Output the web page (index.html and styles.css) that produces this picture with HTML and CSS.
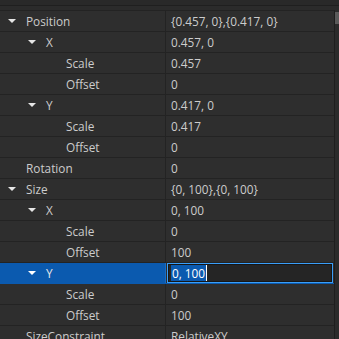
FILE: index.html
```html
<!DOCTYPE html>
<html>
<head>
<meta charset="utf-8">
<link rel="stylesheet" href="styles.css">
</head>
<body>
<div class="panel">
  <div class="topbar"></div>
  <div class="gapbar"></div>
  <div class="main">
    <div class="list">
      <div class="row"><div class="name l0"><span class="arrow"></span>Position</div><div class="val">{0.457, 0},{0.417, 0}</div></div>
      <div class="row"><div class="name l1"><span class="arrow"></span>X</div><div class="val">0.457, 0</div></div>
      <div class="row"><div class="name l2">Scale</div><div class="val">0.457</div></div>
      <div class="row"><div class="name l2">Offset</div><div class="val">0</div></div>
      <div class="row"><div class="name l1"><span class="arrow"></span>Y</div><div class="val">0.417, 0</div></div>
      <div class="row"><div class="name l2">Scale</div><div class="val">0.417</div></div>
      <div class="row"><div class="name l2">Offset</div><div class="val">0</div></div>
      <div class="row"><div class="name l0 noarrow">Rotation</div><div class="val">0</div></div>
      <div class="row"><div class="name l0"><span class="arrow"></span>Size</div><div class="val">{0, 100},{0, 100}</div></div>
      <div class="row"><div class="name l1"><span class="arrow"></span>X</div><div class="val">0, 100</div></div>
      <div class="row"><div class="name l2">Scale</div><div class="val">0</div></div>
      <div class="row"><div class="name l2">Offset</div><div class="val">100</div></div>
      <div class="row selected"><div class="name l1"><span class="arrow"></span>Y</div><div class="val edit"><div class="input"><span class="sel">0, 100</span><span class="caret"></span></div></div></div>
      <div class="row"><div class="name l2">Scale</div><div class="val">0</div></div>
      <div class="row"><div class="name l2">Offset</div><div class="val">100</div></div>
      <div class="row"><div class="name l0 noarrow">SizeConstraint</div><div class="val">RelativeXY</div></div>
    </div>
    <div class="scroll"><div class="thumb"></div></div>
  </div>
</div>
</body>
</html>
```
FILE: styles.css
```css
html, body {
  margin: 0;
  padding: 0;
  background: #2e2e2e;
}
.panel {
  width: 339px;
  height: 339px;
  overflow: hidden;
  display: flex;
  flex-direction: column;
  font-family: "Open Sans", "Noto Sans", sans-serif;
  font-size: 11.8px;
  color: #cccccc;
}
.topbar {
  height: 5px;
  flex: none;
  background: #292929;
  border-bottom: 1px solid #1f1f1f;
}
.gapbar {
  height: 4px;
  flex: none;
  background: #2b2b2b;
}
.main {
  flex: 1;
  display: flex;
  min-height: 0;
}
.list {
  width: 334px;
  flex: none;
  border-right: 1px solid #1e1e1e;
  border-top: 1px solid #232323;
}
.row {
  display: grid;
  grid-template-columns: 166px 1fr;
  height: 20px;
  border-bottom: 1px solid #232323;
  background: #2e2e2e;
}
.name {
  display: flex;
  align-items: center;
  border-right: 1px solid #232323;
  white-space: nowrap;
}
.l0 { padding-left: 8px; }
.l0.noarrow { padding-left: 26px; }
.l1 { padding-left: 28px; }
.l2 { padding-left: 66px; }
.arrow {
  width: 0;
  height: 0;
  border-left: 4px solid transparent;
  border-right: 4px solid transparent;
  border-top: 4px solid #e6e6e6;
  margin-right: 10px;
}
.val {
  display: flex;
  align-items: center;
  padding-left: 5px;
  white-space: nowrap;
}
.selected {
  background: #0b5aaf;
  border-bottom-color: #0b5aaf;
}
.selected .name { color: #e8e8e8; border-right-color: #1a6cc4; }
.selected .arrow { border-top-color: #ffffff; }
.val.edit {
  background: #2e2e2e;
  padding: 0;
  align-items: stretch;
}
.input {
  flex: 1;
  margin: 0 1px 0 1px;
  border: 1px solid #3a9ef8;
  box-shadow: inset 0 0 0 1px #161616;
  background: #252525;
  display: flex;
  align-items: center;
  padding-left: 3px;
}
.sel {
  background: #0b5aaf;
  color: #ffffff;
  line-height: 16px;
  padding: 0 1px;
}
.caret {
  width: 1px;
  height: 16px;
  background: #ffffff;
}
.scroll {
  flex: 1;
  background: #2b2b2b;
}
.thumb {
  margin-top: 2px;
  height: 12px;
  background: #5a5a5a;
}
```
